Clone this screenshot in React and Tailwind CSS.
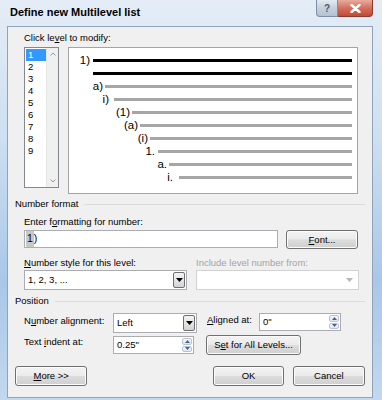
import React from "react";

const levels = [
  { label: "1)", tw: "w-[21px]", ml: "ml-[3px]", line: "bg-black" },
  { label: "", tw: "w-[21px]", ml: "ml-[3px]", line: "bg-black" },
  { label: "a)", tw: "w-[34px]", ml: "ml-[2px]", line: "bg-[#a6a6a6]" },
  { label: "i)", tw: "w-[40px]", ml: "ml-[5px]", line: "bg-[#a6a6a6]" },
  { label: "(1)", tw: "w-[61px]", ml: "ml-[2px]", line: "bg-[#a6a6a6]" },
  { label: "(a)", tw: "w-[69px]", ml: "ml-[2px]", line: "bg-[#a6a6a6]" },
  { label: "(i)", tw: "w-[79px]", ml: "ml-[2px]", line: "bg-[#a6a6a6]" },
  { label: "1.", tw: "w-[86px]", ml: "ml-[3px]", line: "bg-[#a6a6a6]" },
  { label: "a.", tw: "w-[98px]", ml: "ml-[2px]", line: "bg-[#a6a6a6]" },
  { label: "i.", tw: "w-[104px]", ml: "ml-[6px]", line: "bg-[#a6a6a6]" },
];

const btn =
  "flex items-center justify-center rounded-[3px] border border-[#707070] bg-[linear-gradient(to_bottom,#f3f3f3_0%,#ebebeb_48%,#dcdcdc_52%,#cfcfcf_100%)] shadow-[inset_0_0_0_1px_#fbfbfb] text-[9.5px] leading-none text-black";

const DownArrow = ({ color = "#000" }) => (
  <svg width="7" height="4" viewBox="0 0 7 4">
    <path d="M0 0h7L3.5 4z" fill={color} />
  </svg>
);

const Spin = ({ value, w }) => (
  <div className={`${w} h-[18px] flex border border-[#abadb3] bg-white`}>
    <div className="flex-1 pl-[3px] flex items-center text-[9.5px]">{value}</div>
    <div className="w-[12px] flex flex-col gap-[1px] p-[1px]">
      <div className="flex-1 rounded-[2px] border border-[#b8c4d4] bg-[linear-gradient(#f6f8fb,#dfe6ef)] flex items-center justify-center">
        <svg width="5" height="3" viewBox="0 0 5 3"><path d="M0 3h5L2.5 0z" fill="#4d6185" /></svg>
      </div>
      <div className="flex-1 rounded-[2px] border border-[#b8c4d4] bg-[linear-gradient(#f6f8fb,#dfe6ef)] flex items-center justify-center">
        <svg width="5" height="3" viewBox="0 0 5 3"><path d="M0 0h5L2.5 3z" fill="#4d6185" /></svg>
      </div>
    </div>
  </div>
);

const Select = ({ value, w }) => (
  <div className={`${w} h-[20px] flex border border-[#abadb3] bg-white`}>
    <div className="flex-1 pl-[3px] flex items-center text-[9.5px]">{value}</div>
    <div className="w-[12px] m-[1px] rounded-[2px] border border-[#707070] bg-[linear-gradient(to_bottom,#f3f3f3,#e6e6e6_50%,#d2d2d2)] flex items-center justify-center">
      <DownArrow />
    </div>
  </div>
);

const Header = ({ children }) => (
  <div className="flex items-center h-[12px]">
    <span className="text-[9.5px] leading-[12px]">{children}</span>
    <div className="flex-1 ml-[6px] h-px bg-[#dcdcdc]" />
  </div>
);

export default function App() {
  return (
    <div className="w-[382px] h-[400px] overflow-hidden bg-[linear-gradient(to_bottom,#e4edf6_0%,#cddff1_35%,#a9c7e8_70%,#c2d8ef_100%)] font-['Liberation_Sans',Arial,sans-serif] text-black">
      {/* title bar */}
      <div className="h-[26px] flex items-start">
        <div className="pl-[10px] pt-[6px] text-[11px] font-bold leading-[13px]">Define new Multilevel list</div>
        <div className="ml-auto mr-[9px] flex">
          <div className="w-[22px] h-[17px] rounded-bl-[4px] border border-[#7d8fa5] border-t-0 bg-[linear-gradient(to_bottom,#e3e9f0,#c5d0dc_50%,#b3c2d3)] flex items-center justify-center text-[10px] font-bold text-[#4a5a6e]">
            ?
          </div>
          <div className="w-[35px] h-[17px] rounded-br-[4px] border border-[#8a3a33] border-t-0 border-l-0 bg-[linear-gradient(to_bottom,#e9ab9d,#d2705f_50%,#c24a36)] flex items-center justify-center">
            <svg width="11" height="9" viewBox="0 0 11 9">
              <path d="M1.5 1l8 7M9.5 1l-8 7" stroke="#fff" strokeWidth="2.4" strokeLinecap="round" />
            </svg>
          </div>
        </div>
      </div>

      {/* client area */}
      <div className="ml-[7px] w-[366px] h-[372px] border border-[#8fa4ba] bg-[#f0f0f0] px-[7px] pt-[5px]">
        <div className="ml-[9px]">
          <div className="text-[9.5px] leading-[12px] h-[12px]">
            Click le<span className="underline">v</span>el to modify:
          </div>
          <div className="mt-[3px] flex items-start gap-[9px]">
            {/* level list */}
            <div className="w-[35px] h-[141px] flex border border-[#828790] bg-white">
              <div className="flex-1 pt-[1px] pl-[1px]">
                {[1, 2, 3, 4, 5, 6, 7, 8, 9].map((n) => (
                  <div
                    key={n}
                    className={`h-[12px] pl-[2px] text-[9.5px] leading-[12px] ${n === 1 ? "bg-[#3399ff] text-white" : ""}`}
                  >
                    {n}
                  </div>
                ))}
              </div>
              <div className="w-[12px] bg-[#f0f0f0] border-l border-[#e6e6e6] flex flex-col justify-between items-center py-[4px]">
                <svg width="6" height="4" viewBox="0 0 6 4"><path d="M0.5 3.5L3 1l2.5 2.5" stroke="#9a9a9a" fill="none" /></svg>
                <svg width="6" height="4" viewBox="0 0 6 4"><path d="M0.5 0.5L3 3l2.5-2.5" stroke="#9a9a9a" fill="none" /></svg>
              </div>
            </div>
            {/* preview */}
            <div className="w-[290px] h-[147px] border border-[#a5a5a5] bg-white pt-[6px] pr-[5px]">
              {levels.map((l, i) => (
                <div key={i} className="h-[13px] flex items-center">
                  <div className={`${l.tw} shrink-0 text-right text-[11.5px] leading-[13px]`}>{l.label}</div>
                  <div className={`${l.ml} flex-1 h-[3px] ${l.line}`} />
                </div>
              ))}
            </div>
          </div>
        </div>

        <div className="mt-[4px]">
          <Header>Number format</Header>
        </div>
        <div className="ml-[9px]">
          <div className="mt-[6px] text-[9.5px] leading-[12px] h-[12px]">
            Enter f<span className="underline">o</span>rmatting for number:
          </div>
          <div className="mt-[2px] flex items-start gap-[8px]">
            <div className="w-[254px] h-[18px] border border-[#abadb3] bg-white flex items-center pl-[1px] text-[10.5px]">
              <span className="bg-[#c8c8c8] px-[1px]">1</span>
              <span>)</span>
            </div>
            <div className={`${btn} w-[72px] h-[19px]`}>
              <span><span className="underline">F</span>ont...</span>
            </div>
          </div>
          <div className="mt-[8px] flex gap-[9px] text-[9.5px] leading-[12px] h-[12px]">
            <div className="w-[163px]">
              <span className="underline">N</span>umber style for this level:
            </div>
            <div className="text-[#a3a3a3]">Include level number from:</div>
          </div>
          <div className="mt-[1px] flex gap-[9px]">
            <Select value="1, 2, 3, ..." w="w-[163px]" />
            <div className="w-[163px] h-[20px] flex items-center justify-end pr-[5px] border border-[#d2d2d2] bg-white">
              <DownArrow color="#b5b5b5" />
            </div>
          </div>
        </div>

        <div className="mt-[5px]">
          <Header>Position</Header>
        </div>
        <div className="ml-[9px]">
          <div className="mt-[6px] flex items-center text-[9.5px]">
            <div className="w-[89px] -mt-[3px]">
              N<span className="underline">u</span>mber alignment:
            </div>
            <Select value="Left" w="w-[84px]" />
            <div className="ml-[10px] w-[52px] -mt-[6px]">
              <span className="underline">A</span>ligned at:
            </div>
            <div className="-mt-[2px]">
              <Spin value={'0"'} w="w-[82px]" />
            </div>
          </div>
          <div className="mt-[2px] flex items-center text-[9.5px]">
            <div className="w-[89px] -mt-[5px]">
              Text <span className="underline">i</span>ndent at:
            </div>
            <Spin value={'0.25"'} w="w-[81px]" />
            <div className={`${btn} ml-[12px] w-[95px] h-[20px]`}>
              <span>S<span className="underline">e</span>t for All Levels...</span>
            </div>
          </div>
        </div>

        <div className="mt-[11px] flex">
          <div className={`${btn} w-[73px] h-[20px]`}>
            <span><span className="underline">M</span>ore &gt;&gt;</span>
          </div>
          <div className={`${btn} ml-[126px] w-[71px] h-[20px] border-[#3c7fb1] shadow-[inset_0_0_0_1px_#9bd3f2]`}>
            <span>OK</span>
          </div>
          <div className={`${btn} ml-[9px] w-[73px] h-[20px]`}>
            <span>Cancel</span>
          </div>
        </div>
      </div>
    </div>
  );
}
